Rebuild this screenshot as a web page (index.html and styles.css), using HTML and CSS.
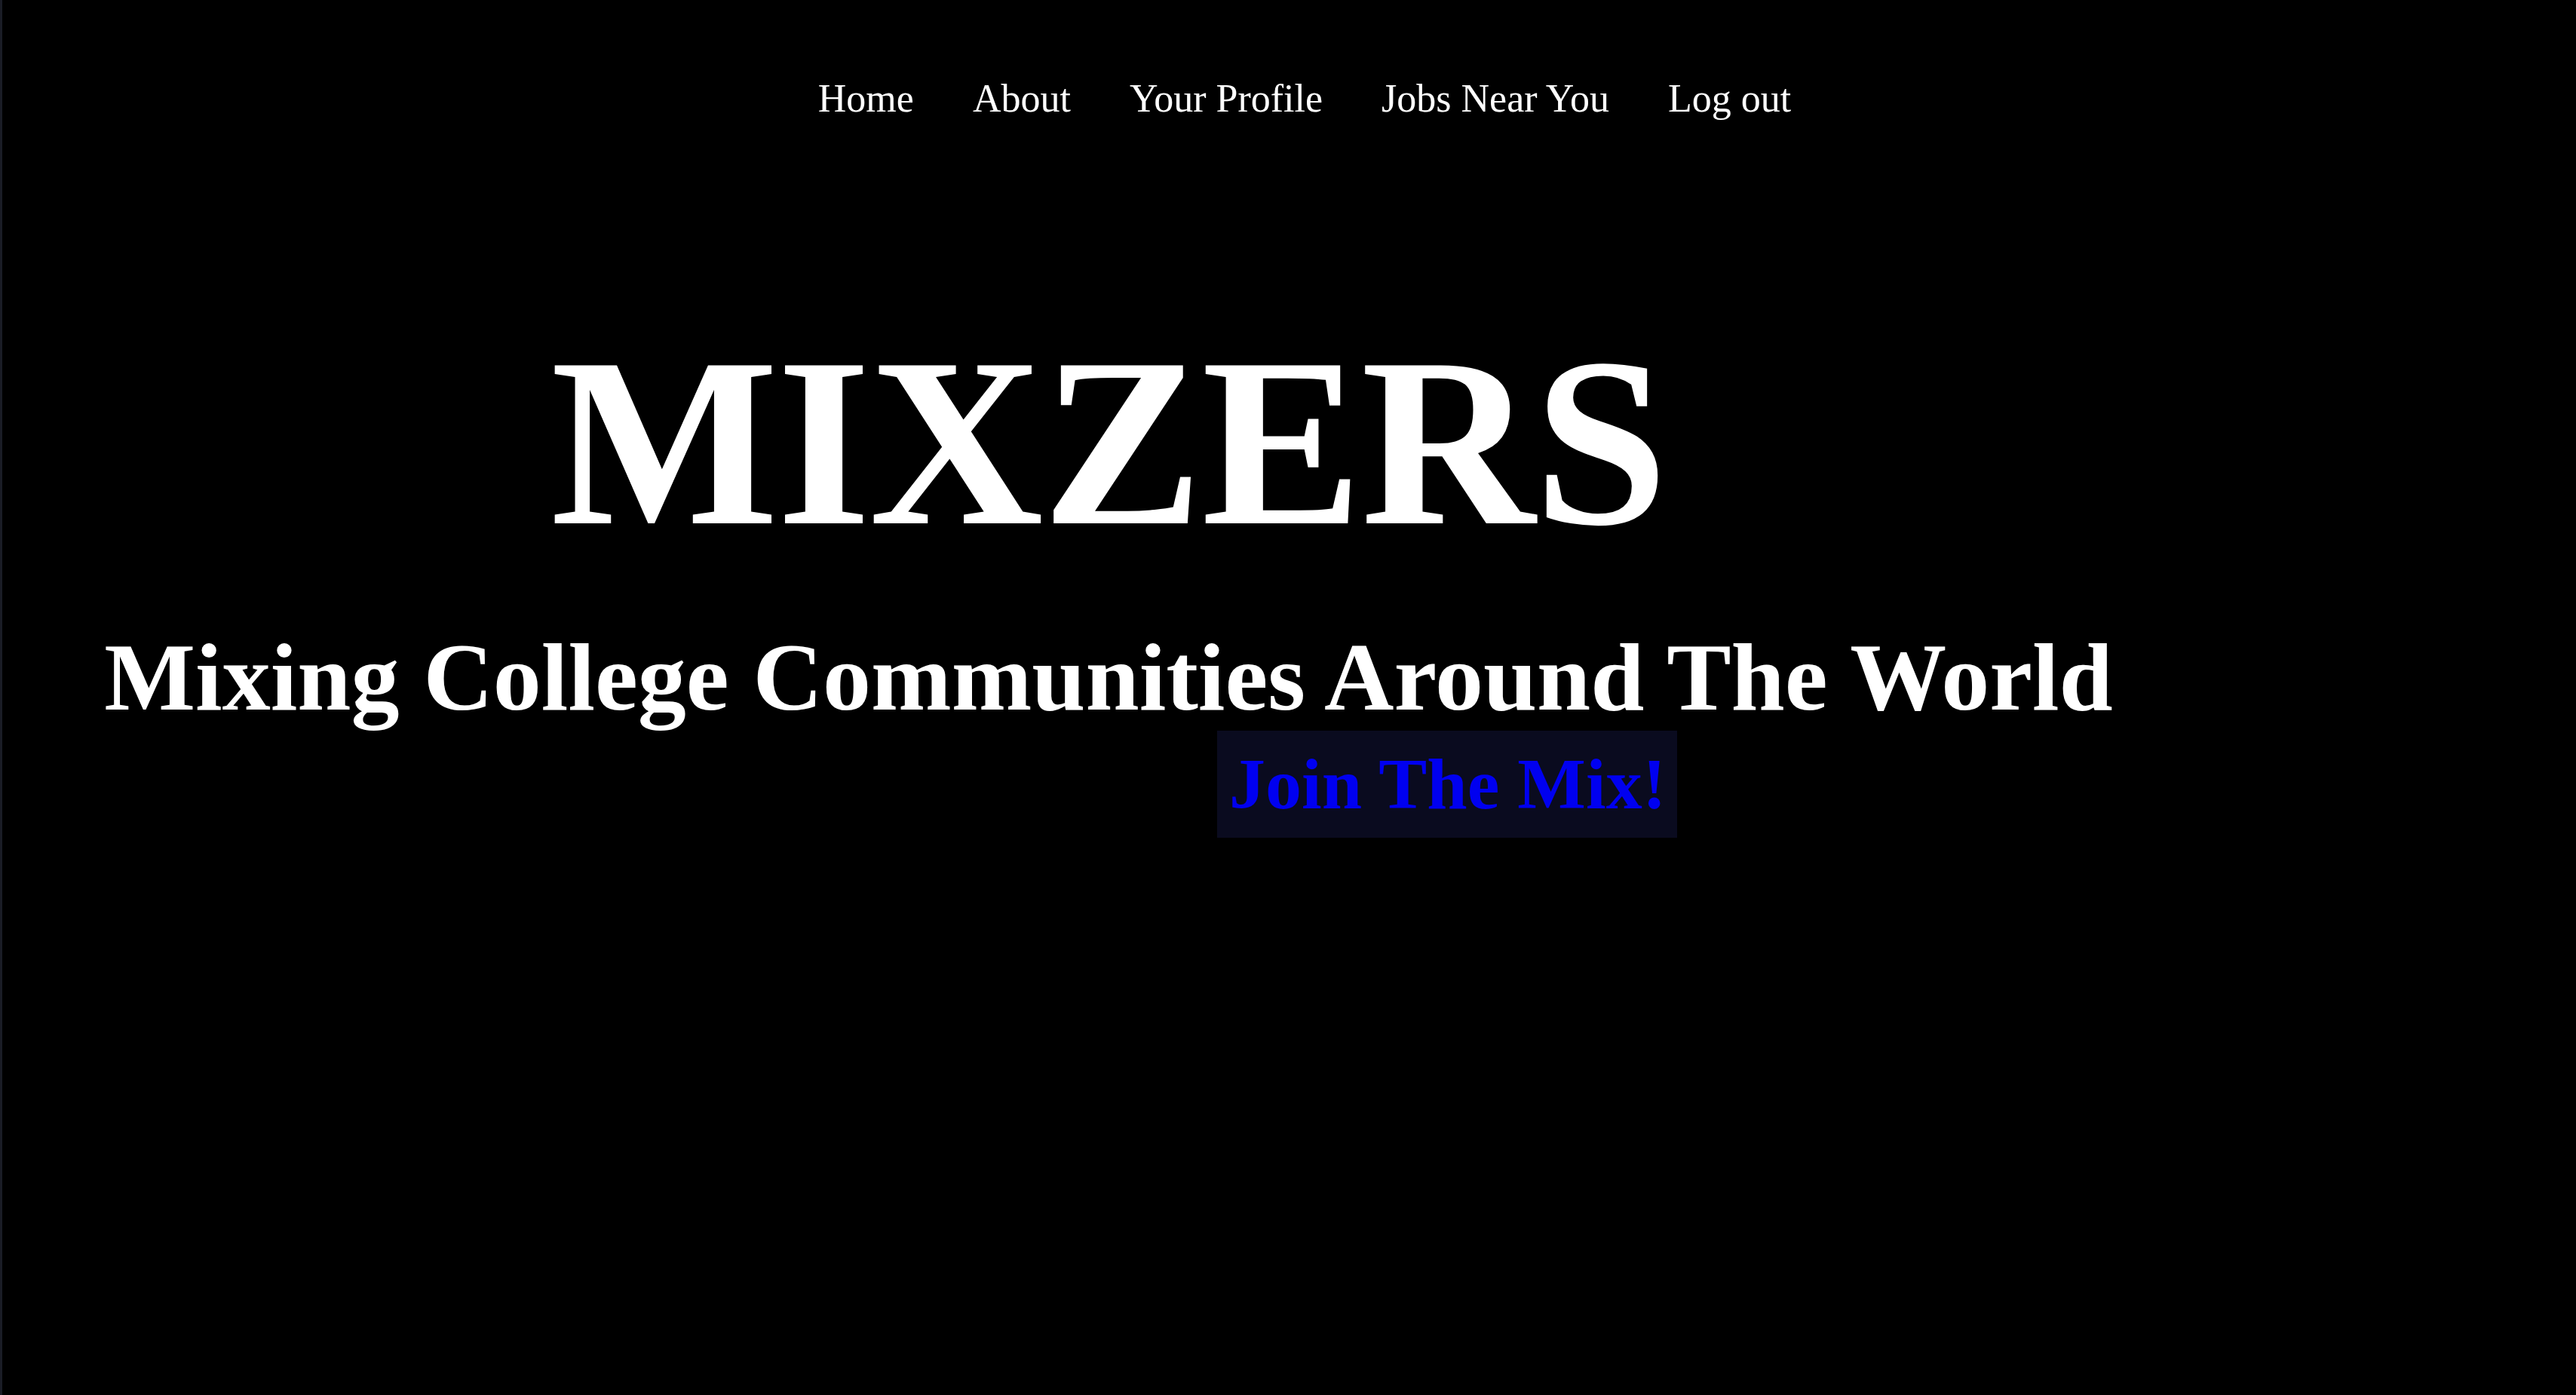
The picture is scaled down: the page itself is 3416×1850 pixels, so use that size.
FILE: index.html
```html
<!DOCTYPE html>
<html lang="en">
<head>
<meta charset="utf-8">
<title>Mixzers</title>
<link rel="stylesheet" href="styles.css">
</head>
<body>
<div class="page">
  <nav class="nav">
    <ul class="nav-list">
      <li><a class="nav-link" href="#">Home</a></li>
      <li><a class="nav-link" href="#">About</a></li>
      <li><a class="nav-link" href="#">Your Profile</a></li>
      <li><a class="nav-link" href="#">Jobs Near You</a></li>
      <li><a class="nav-link" href="#">Log out</a></li>
    </ul>
  </nav>
  <header class="hero">
    <h1 class="brand">MIXZERS</h1>
    <h2 class="tagline">Mixing College Communities Around The World</h2>
  </header>
  <div class="cta-row">
    <a class="cta" href="#">Join The Mix!</a>
  </div>
</div>
</body>
</html>
```
FILE: styles.css
```css
html, body {
  margin: 0;
  padding: 0;
  background: #000;
}
body {
  font-family: "Liberation Serif", "Times New Roman", serif;
  color: #fff;
  min-height: 1850px;
  box-shadow: inset 3px 0 0 #1a1d26;
}
.page {
  display: flex;
  flex-direction: column;
}
.nav {
  padding-top: 101px;
}
.nav-list {
  list-style: none;
  margin: 0;
  padding: 0 0 0 44px;
  display: flex;
  justify-content: center;
  gap: 78px;
}
.nav-link {
  color: #fff;
  text-decoration: none;
  font-size: 52px;
  line-height: 60px;
  display: block;
}
.hero {
  width: 2940px;
  text-align: center;
}
.brand {
  margin: 265px 0 0 0;
  font-size: 320px;
  line-height: 320px;
  font-weight: bold;
  letter-spacing: -2px;
}
.tagline {
  margin: 82px 0 0 0;
  font-size: 128px;
  line-height: 141px;
  font-weight: bold;
}
.cta-row {
  display: flex;
  padding-left: 1614px;
}
.cta {
  background: #0a0b1f;
  color: #0000f0;
  font-size: 96px;
  line-height: 110px;
  font-weight: bold;
  padding: 16px 14px 16px 16px;
  text-decoration: none;
}
```
